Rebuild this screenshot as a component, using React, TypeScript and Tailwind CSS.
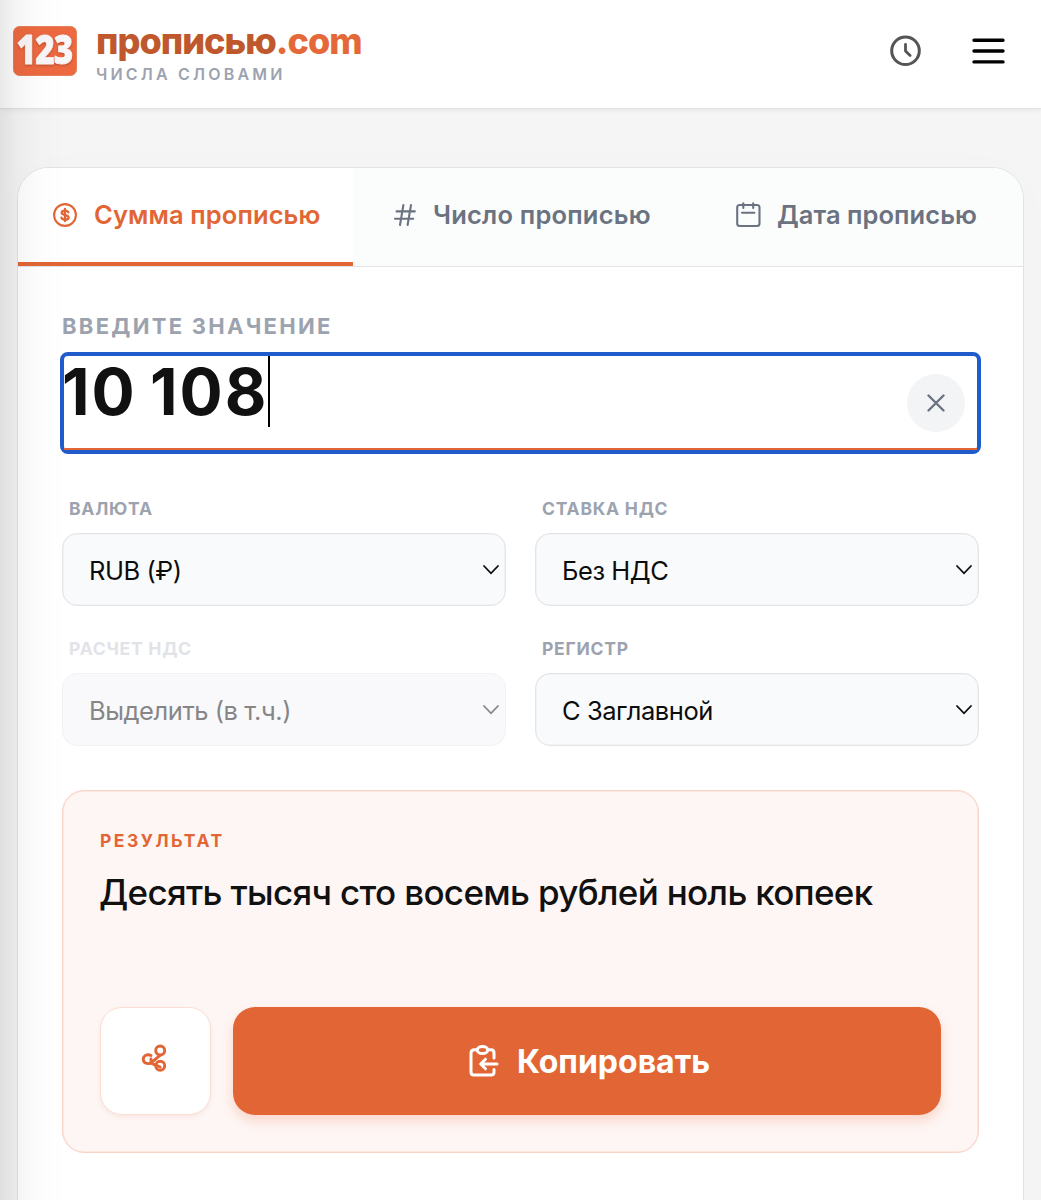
import React from "react";

const orange = "#e26635";

function Logo() {
  return (
    <svg width="64" height="50" viewBox="0 0 64 50" className="shrink-0 overflow-visible">
      <rect x="0.5" y="0.5" width="63" height="49" rx="6" fill="#ed6940" stroke="#e57f5c" />
      <text
        x="3.5"
        y="38"
        textLength="56"
        lengthAdjust="spacingAndGlyphs"
        fontFamily="'Open Sans'"
        fontWeight="800"
        fontSize="40"
        letterSpacing="-1"
        fill="#f9f6f8"
        stroke="#f9f6f8"
        strokeWidth="0.8"
        strokeLinejoin="round"
        style={{ filter: "drop-shadow(0 1px 1px rgba(120,30,0,.4))" }}
      >
        123
      </text>
    </svg>
  );
}

function CoinIcon() {
  return (
    <svg width="24" height="24" viewBox="0 0 24 24" fill="none" stroke={orange} strokeWidth="2.1" strokeLinecap="round" className="shrink-0">
      <circle cx="12" cy="12" r="10.9" />
      <path d="M15.4 9.4C15 8.2 13.7 7.6 12 7.6c-2 0-3.300.8-3.300 2.100 0 3.100 6.900 1.500 6.900 4.700 0 1.400-1.500 2.200-3.500 2.200-2 0-3.300-.7-3.700-2M12 6v12" strokeWidth="2.300" />
    </svg>
  );
}

function HashIcon() {
  return (
    <svg width="24" height="24" viewBox="0 0 24 24" fill="none" stroke="#6b7280" strokeWidth="2.1" strokeLinecap="round" className="shrink-0">
      <path d="M10.4 2 7 22M18 2l-3.4 20M3.6 8.4h18.2M2 15.8h18.2" />
    </svg>
  );
}

function CalendarIcon() {
  return (
    <svg width="26" height="26" viewBox="0 0 26 26" fill="none" stroke="#6b7280" strokeWidth="2.1" strokeLinecap="round" className="shrink-0">
      <rect x="2.2" y="3" width="22.3" height="21" rx="2.5" />
      <path d="M8.3 1.2v4.8M18.2 1.2v4.8M7 10.7h12.4" />
    </svg>
  );
}

function Select({ label, value, disabled = false }: { label: string; value: string; disabled?: boolean }) {
  return (
    <div className="flex flex-col">
      <span className={"ml-[7px] h-6 text-[17.5px] leading-[23px] font-bold tracking-[0.76px] " + (disabled ? "text-[#e1e3e8]" : "text-[#9ca3af]")}>
        {label}
      </span>
      <div
        className={
          "mt-[12px] flex h-[73px] items-center justify-between rounded-[15px] border-[1.5px] pr-[5px] pl-[26px] " +
          (disabled
            ? "border-[#f1f2f4] bg-[#f9f9fb] text-[#868686]"
            : "border-[#e3e5e9] bg-[#f9fafc] text-[#0c0c0c] shadow-[inset_0_0_0_0.5px_#e9ebee]")
        }
      >
        <span className="pt-[2px] text-[25.5px] leading-8 tracking-[-0.45px]">{value}</span>
        <svg width="18" height="12" viewBox="0 0 18 12" fill="none" stroke="currentColor" strokeWidth="1.8" strokeLinecap="round">
          <path d="M2 2l7 7.3L16 2" />
        </svg>
      </div>
    </div>
  );
}

export default function App() {
  return (
    <div className="relative flex h-[1200px] w-[1041px] flex-col overflow-hidden bg-[#f5f5f5] font-['Inter',sans-serif] whitespace-nowrap">
      <header className="z-10 flex h-[109px] shrink-0 border-b border-[#e1e2e8] bg-white pr-[36px] pl-[13px] shadow-[0_1px_5px_rgba(0,0,0,0.07)]">
        <div className="pt-[26px]">
          <Logo />
        </div>
        <div className="ml-[19px] flex flex-col pt-[20px]">
          <span className="h-[44px] text-[36px] leading-[43px] font-extrabold tracking-[-0.98px] text-[#bf582d]">
            прописью<span className="text-[#e56938]">.com</span>
          </span>
          <span className="h-5 text-[16px] leading-[20px] font-semibold tracking-[3.2px] text-[#9ca3af]">ЧИСЛА СЛОВАМИ</span>
        </div>
        <div className="ml-auto flex h-[101px] items-center gap-[50px]">
          <svg width="32" height="32" viewBox="0 0 32 32" fill="none" stroke="#555" strokeWidth="3" strokeLinecap="round" strokeLinejoin="round">
            <circle cx="15.5" cy="15.7" r="13.8" />
            <path d="M15.5 9.3v6.7l4.6 4.6" strokeWidth="2.8" />
          </svg>
          <svg width="33" height="28" viewBox="0 0 33 28" stroke="#000" strokeWidth="3.4" strokeLinecap="round">
            <path d="M2 3.2h29M2 14h29M2 24.9h29" />
          </svg>
        </div>
      </header>

      <main className="mt-[58px] ml-[17px] flex h-[1200px] w-[1007px] shrink-0 flex-col overflow-hidden rounded-[32px] border border-[#e1e2e8] bg-white shadow-[0_4px_50px_rgba(0,0,0,0.015)]">
        <nav className="flex h-[99px] shrink-0 border-b-[1.5px] border-[#e1e2e8] bg-[#fbfdfd] text-[25.5px] font-semibold text-[#6b7280]">
          <div className="flex w-[335px] items-center gap-[17px] border-b-4 border-[#e26635] bg-white pl-[35px] text-[#e26635]">
            <CoinIcon />
            <span className="tracking-[0.1px]">Сумма прописью</span>
          </div>
          <div className="flex w-[336px] items-center gap-[16px] border-b-4 border-transparent pl-[40px]">
            <HashIcon />
            <span className="tracking-[0.2px]">Число прописью</span>
          </div>
          <div className="flex items-center gap-[16px] border-b-4 border-transparent pl-[46px]">
            <CalendarIcon />
            <span className="tracking-[0.05px]">Дата прописью</span>
          </div>
        </nav>

        <div className="flex flex-col px-[44px] pt-[45px]">
          <span className="h-7 text-[22px] leading-7 font-bold tracking-[2.28px] text-[#9ca3af]">ВВЕДИТЕ ЗНАЧЕНИЕ</span>
          <div className="-mx-[2px] mt-[12px] flex h-[102px] rounded-[8px] border-4 border-[#205bcb]">
            <div className="flex w-full justify-between border-b-2 border-[#e26635]">
              <div className="flex h-[71px]">
                <span className="-ml-[2px] w-[205px] text-[64px] leading-[71px] font-bold tracking-[1.9px] text-[#111] [word-spacing:-3.5px]">10 108</span>
                <span className="ml-px w-[2px] bg-black" />
              </div>
              <button className="mt-[18px] mr-[12px] flex h-[58px] w-[58px] items-center justify-center rounded-full bg-[#f3f4f6]">
                <svg width="18" height="18" viewBox="0 0 18 18" stroke="#6b7280" strokeWidth="2.4" strokeLinecap="round">
                  <path d="M1.5 1.5l15 15M16.5 1.5l-15 15" />
                </svg>
              </button>
            </div>
          </div>

          <div className="mt-[43px] grid grid-cols-2 gap-x-[29px] gap-y-[31px]">
            <Select label="ВАЛЮТА" value="RUB (₽)" />
            <Select label="СТАВКА НДС" value="Без НДС" />
            <Select label="РАСЧЕТ НДС" value="Выделить (в т.ч.)" disabled />
            <Select label="РЕГИСТР" value="С Заглавной" />
          </div>

          <section className="mt-[44px] flex h-[363px] flex-col rounded-[22px] border-[1.5px] border-[#fad4c8] bg-[#fef6f4] px-[37px] pt-[38px] shadow-[inset_0_0_0_0.5px_#fad8cd]">
            <span className="h-6 text-[17.5px] leading-6 font-bold tracking-[2.5px] text-[#e26635]">РЕЗУЛЬТАТ</span>
            <span className="-ml-px mt-[15px] h-12 text-[35px] leading-12 font-medium tracking-[-0.67px] text-[#111]">
              Десять тысяч сто восемь рублей ноль копеек
            </span>
            <div className="mt-[91px] flex h-[108px] gap-[22px]">
              <button className="flex w-[111px] shrink-0 items-center justify-center rounded-[22px] border-[1.5px] border-[#fbdfd5] bg-white shadow-[0_2px_4px_rgba(160,70,40,0.08)]">
                <svg width="26" height="30" viewBox="0 0 26 30" fill="none" stroke={orange} strokeWidth="2.9" strokeLinecap="round" className="relative -top-[3px] -left-[2px]">
                  <circle cx="19.2" cy="7.5" r="4.5" />
                  <circle cx="19.2" cy="22.7" r="4.5" />
                  <path d="M10 12.5C6.5 10.5 2.3 12.6 2.3 16.2s3.500 5.300 7.500 4L19 12.300M10 16v4.200l6 2.500 3.200 1.300" />
                </svg>
              </button>
              <button className="flex grow items-center justify-center gap-[18px] rounded-[22px] bg-[#e26635] pl-[5px] text-[32px] font-bold text-white shadow-[0_6px_12px_rgba(226,102,53,0.22)]">
                <svg width="30" height="32" viewBox="0 0 30 32" fill="none" stroke="white" strokeWidth="3" strokeLinecap="round" strokeLinejoin="round">
                  <path d="M8 4.8H5.5Q2 4.8 2 8.3V27q0 3 3 3h17q3 0 3-3v-2.500M18.500 4.800H22q3 0 3 3V13M28 19H12.500M16.500 14.200 11.700 19l4.800 4.800" />
                  <ellipse cx="13.5" cy="5" rx="5.3" ry="3.5" />
                </svg>
                <span className="relative top-px">Копировать</span>
              </button>
            </div>
          </section>
        </div>
      </main>

      <div className="pointer-events-none absolute inset-y-0 left-0 z-20 w-[66px] bg-[linear-gradient(to_right,rgba(0,0,0,0.085),rgba(0,0,0,0.04)_25%,rgba(0,0,0,0.01)_60%,transparent)]" />
    </div>
  );
}
